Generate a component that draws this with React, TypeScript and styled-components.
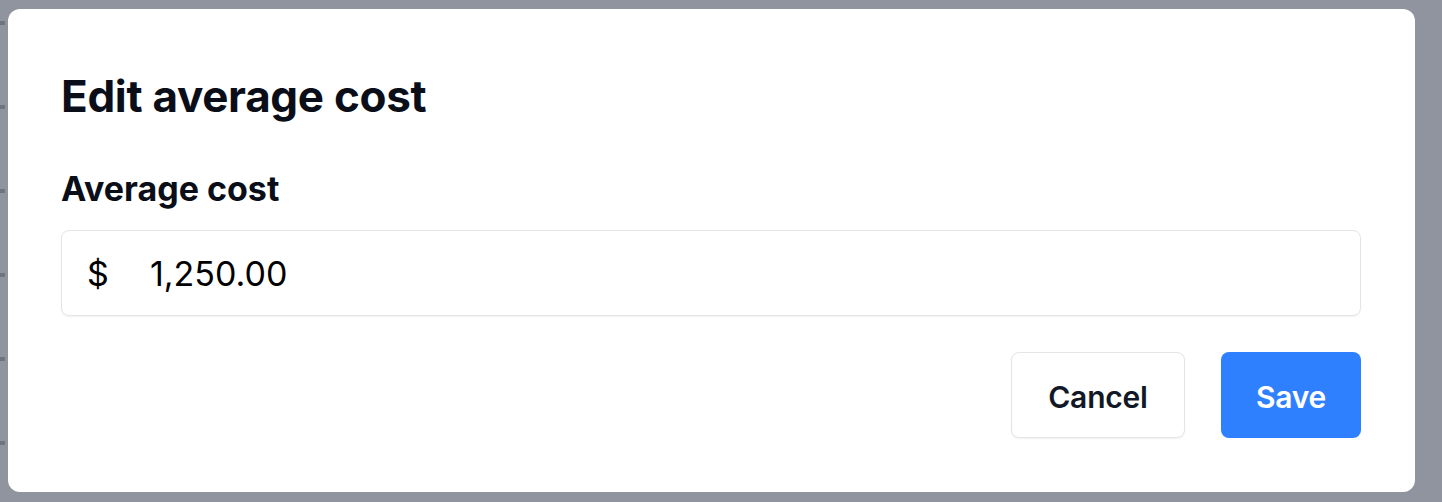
import React from "react";
import styled, { createGlobalStyle } from "styled-components";

const GlobalStyle = createGlobalStyle`
  html, body { margin: 0; padding: 0; }
  body {
    font-family: Inter, "Noto Sans", sans-serif;
    background: #8f949e;
  }
  * { box-sizing: border-box; }
`;

const Backdrop = styled.div`
  width: 1442px;
  height: 502px;
  padding: 9px 27px 10px 8px;
  background-color: #8f949e;
  background-image: repeating-linear-gradient(
    to bottom,
    transparent 0px,
    transparent 21px,
    #6f7580 21px,
    #6f7580 25px,
    transparent 25px,
    transparent 84px
  );
  background-size: 5px 100%;
  background-repeat: no-repeat;
`;

const Dialog = styled.div`
  width: 1407px;
  height: 483px;
  background: #ffffff;
  border-radius: 12px;
  padding: 61px 54px 54px 53px;
  display: flex;
  flex-direction: column;
`;

const Title = styled.h2`
  margin: 0;
  font-size: 44px;
  line-height: 52px;
  font-weight: 700;
  color: #0a0e18;
  letter-spacing: -0.3px;
`;

const Label = styled.label`
  margin-top: 47px;
  font-size: 34px;
  line-height: 40px;
  font-weight: 700;
  color: #0a0e18;
`;

const InputBox = styled.div`
  margin-top: 21px;
  height: 86px;
  flex-shrink: 0;
  border: 1.5px solid #e3e5e9;
  border-radius: 8px;
  box-shadow: 0 1px 2px rgba(16, 24, 40, 0.06);
  display: flex;
  align-items: center;
  padding-left: 25px;
  font-size: 34px;
  color: #000;
`;

const Prefix = styled.span`
  width: 63px;
`;

const Value = styled.span``;

const Actions = styled.div`
  margin-top: 36px;
  display: flex;
  justify-content: flex-end;
  gap: 36px;
`;

const Button = styled.button<{ $primary?: boolean }>`
  height: 86px;
  padding: 3px 0 0;
  border-radius: 8px;
  font-family: Inter, "Noto Sans", sans-serif;
  font-size: 30px;
  font-weight: 600;
  letter-spacing: -0.2px;
  cursor: pointer;
  border: ${(p) => (p.$primary ? "none" : "1.5px solid #e3e5e9")};
  background: ${(p) => (p.$primary ? "#2f80ff" : "#ffffff")};
  color: ${(p) => (p.$primary ? "#ffffff" : "#111827")};
  box-shadow: ${(p) => (p.$primary ? "none" : "0 1px 2px rgba(16, 24, 40, 0.06)")};
  width: ${(p) => (p.$primary ? "140px" : "174px")};
`;

export default function App() {
  return (
    <>
      <GlobalStyle />
      <Backdrop>
        <Dialog>
          <Title>Edit average cost</Title>
          <Label>Average cost</Label>
          <InputBox>
            <Prefix>$</Prefix>
            <Value>1,250.00</Value>
          </InputBox>
          <Actions>
            <Button>Cancel</Button>
            <Button $primary>Save</Button>
          </Actions>
        </Dialog>
      </Backdrop>
    </>
  );
}
